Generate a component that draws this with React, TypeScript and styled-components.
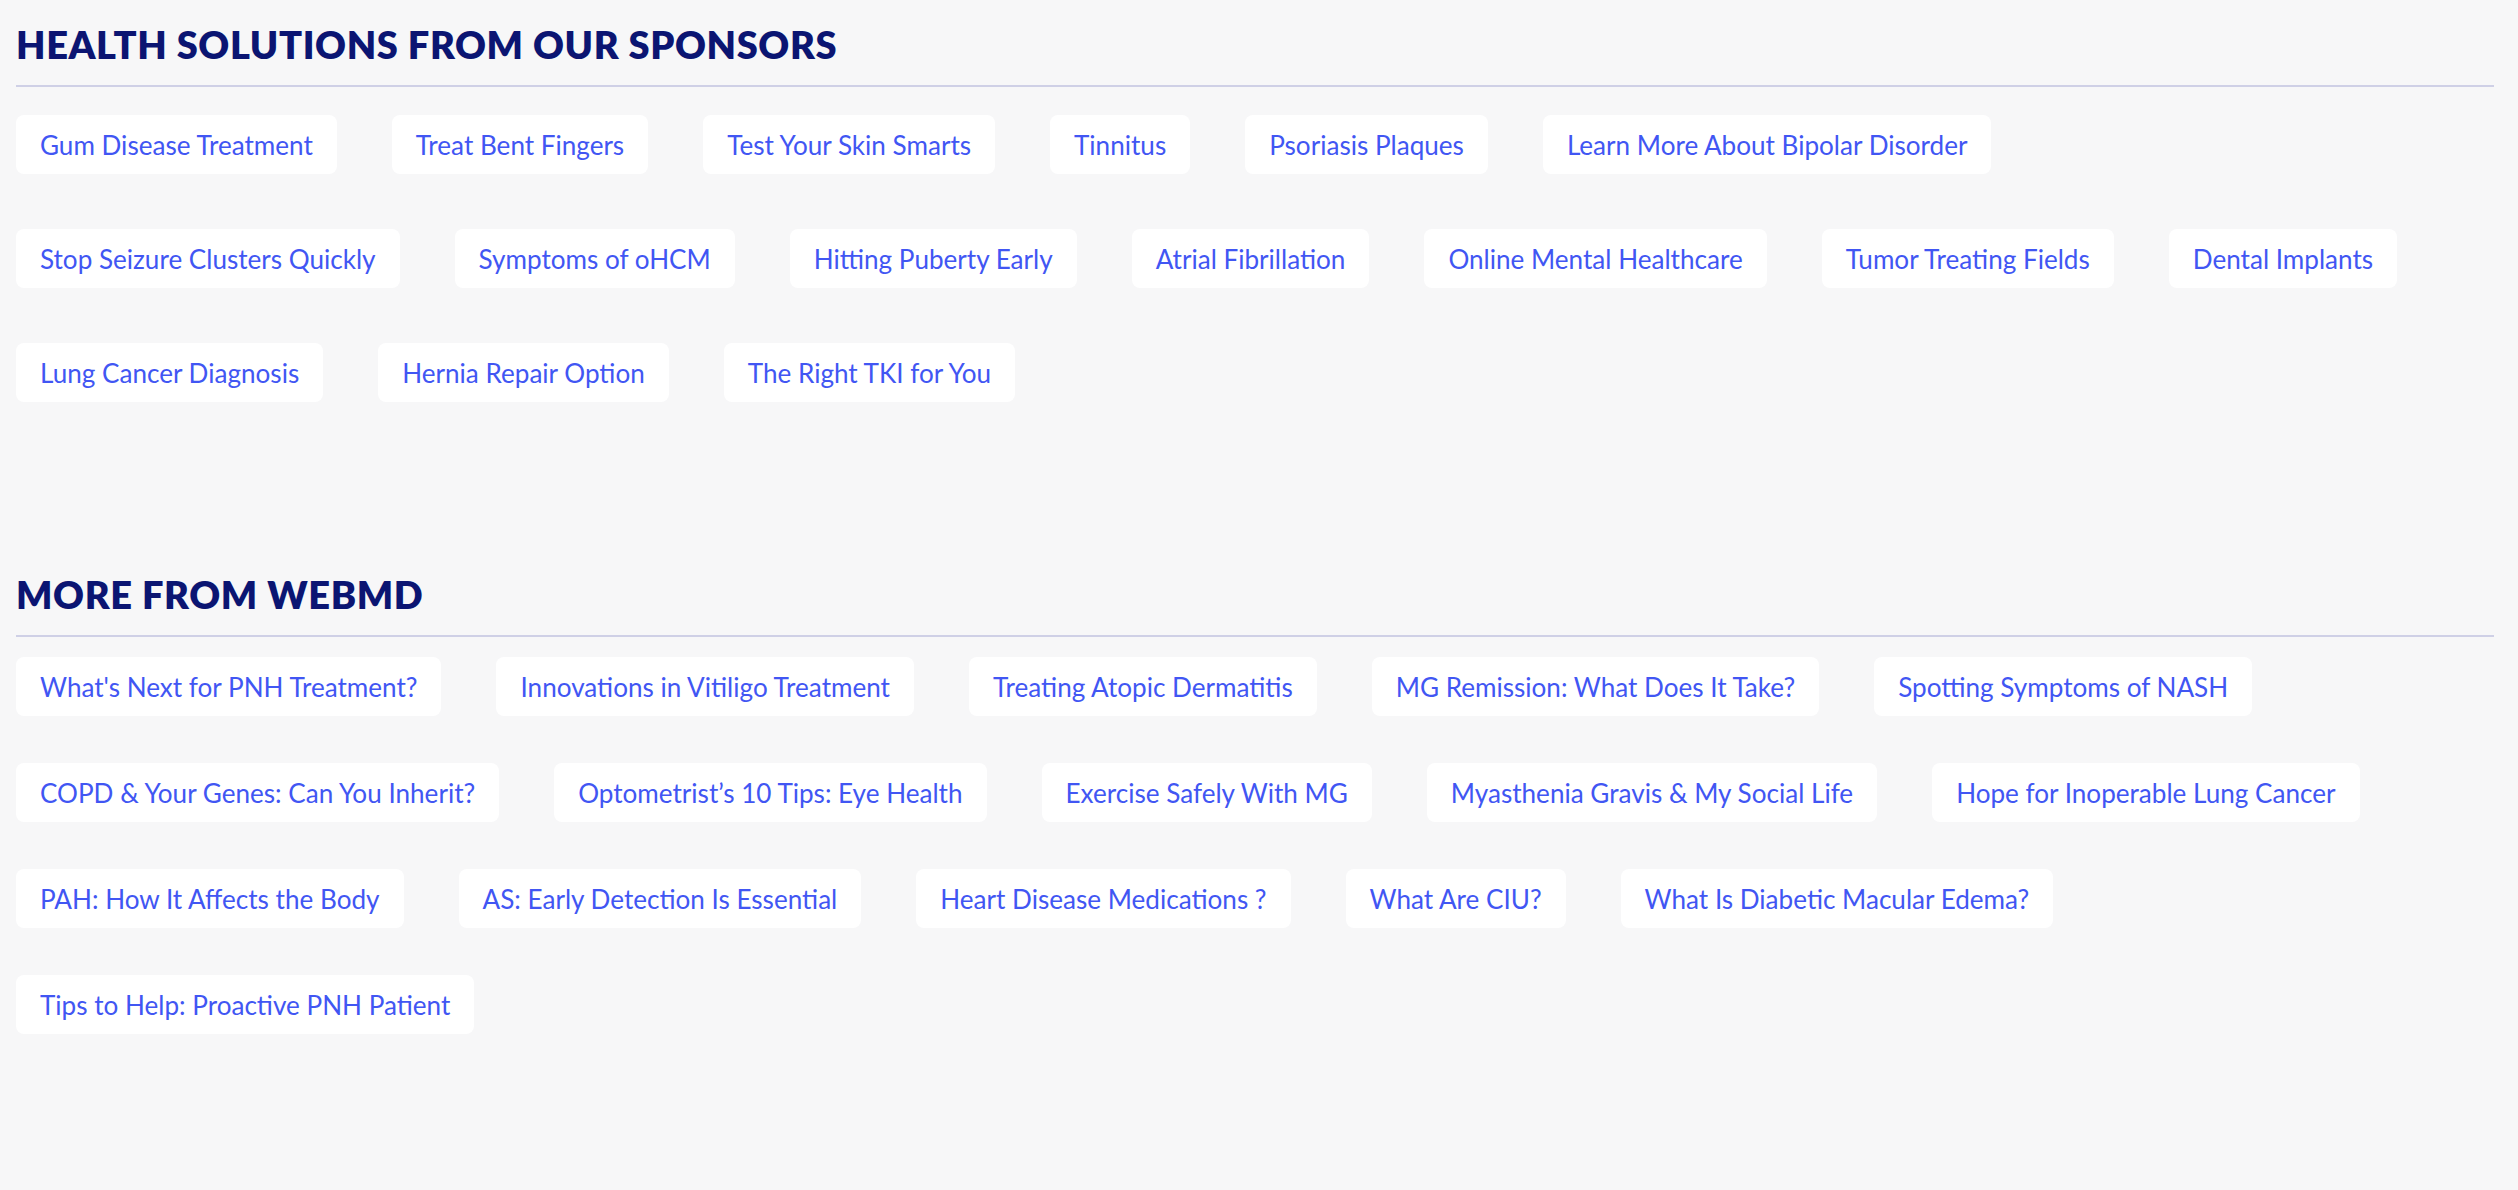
import React from "react";
import styled, { createGlobalStyle } from "styled-components";

const GlobalStyle = createGlobalStyle`
  html, body {
    margin: 0;
    padding: 0;
    background: #f7f7f8;
  }
  body {
    font-family: "Lato", "Open Sans", sans-serif;
  }
`;

const Page = styled.main`
  box-sizing: border-box;
  min-height: 1190px;
  padding: 21px 24px 0 16px;
`;

const Section = styled.section<{ $top: number }>`
  margin-top: ${(p) => p.$top}px;
`;

const Heading = styled.h2`
  margin: 0;
  padding-bottom: 17px;
  border-bottom: 2px solid #cfd0e6;
  font-family: "Lato", sans-serif;
  font-size: 38px;
  line-height: 47px;
  font-weight: 800;
  letter-spacing: 0.6px;
  text-transform: uppercase;
  color: #0b1572;
`;

const List = styled.div<{ $top: number; $rowGap: number }>`
  display: flex;
  flex-direction: column;
  gap: ${(p) => p.$rowGap}px;
  margin-top: ${(p) => p.$top}px;
`;

const Row = styled.div`
  display: flex;
  gap: 55px;
`;

const Pill = styled.a`
  display: flex;
  align-items: center;
  box-sizing: border-box;
  height: 59px;
  padding: 0 24px;
  background: #ffffff;
  border-radius: 8px;
  font-family: "Lato", sans-serif;
  font-size: 26.1px;
  color: #4156f3;
  text-decoration: none;
  white-space: nowrap;
`;

const sponsors: string[][] = [
  [
    "Gum Disease Treatment",
    "Treat Bent Fingers",
    "Test Your Skin Smarts",
    "Tinnitus",
    "Psoriasis Plaques",
    "Learn More About Bipolar Disorder",
  ],
  [
    "Stop Seizure Clusters Quickly",
    "Symptoms of oHCM",
    "Hitting Puberty Early",
    "Atrial Fibrillation",
    "Online Mental Healthcare",
    "Tumor Treating Fields",
    "Dental Implants",
  ],
  ["Lung Cancer Diagnosis", "Hernia Repair Option", "The Right TKI for You"],
];

const more: string[][] = [
  [
    "What's Next for PNH Treatment?",
    "Innovations in Vitiligo Treatment",
    "Treating Atopic Dermatitis",
    "MG Remission: What Does It Take?",
    "Spotting Symptoms of NASH",
  ],
  [
    "COPD & Your Genes: Can You Inherit?",
    "Optometrist’s 10 Tips: Eye Health",
    "Exercise Safely With MG",
    "Myasthenia Gravis & My Social Life",
    "Hope for Inoperable Lung Cancer",
  ],
  [
    "PAH: How It Affects the Body",
    "AS: Early Detection Is Essential",
    "Heart Disease Medications ?",
    "What Are CIU?",
    "What Is Diabetic Macular Edema?",
  ],
  ["Tips to Help: Proactive PNH Patient"],
];

function LinkBlock({
  title,
  rows,
  top,
  listTop,
  rowGap,
}: {
  title: string;
  rows: string[][];
  top: number;
  listTop: number;
  rowGap: number;
}) {
  return (
    <Section $top={top}>
      <Heading>{title}</Heading>
      <List $top={listTop} $rowGap={rowGap}>
        {rows.map((row, i) => (
          <Row key={i}>
            {row.map((label) => (
              <Pill key={label} href="#">
                {label}
              </Pill>
            ))}
          </Row>
        ))}
      </List>
    </Section>
  );
}

export default function App() {
  return (
    <>
      <GlobalStyle />
      <Page>
        <LinkBlock
          title="Health Solutions From Our Sponsors"
          rows={sponsors}
          top={0}
          listTop={28}
          rowGap={55}
        />
        <LinkBlock
          title="More From WebMD"
          rows={more}
          top={169}
          listTop={20}
          rowGap={47}
        />
      </Page>
    </>
  );
}
